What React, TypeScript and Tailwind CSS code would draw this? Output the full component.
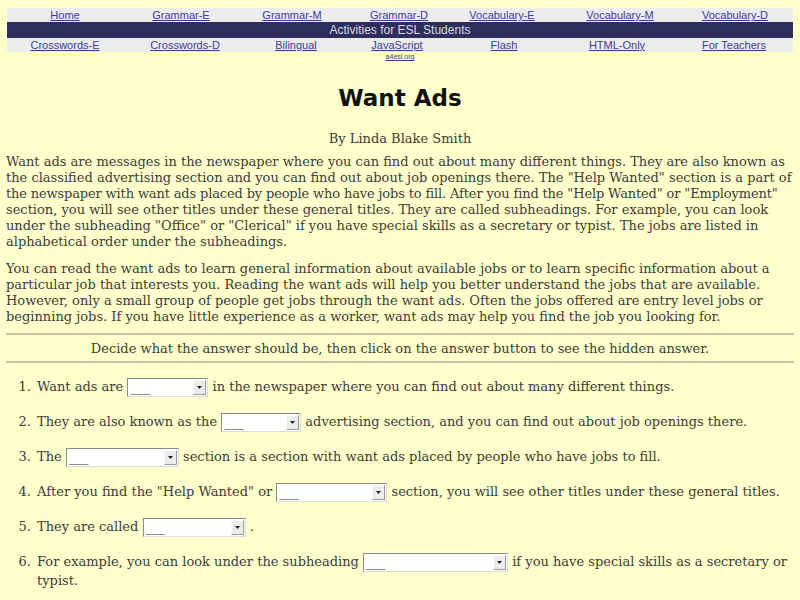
import React from "react";

const topLinks = ["Home", "Grammar-E", "Grammar-M", "Grammar-D", "Vocabulary-E", "Vocabulary-M", "Vocabulary-D"];
const bottomLinks = ["Crosswords-E", "Crosswords-D", "Bilingual", "JavaScript", "Flash", "HTML-Only", "For Teachers"];

const introLines = [
  "Want ads are messages in the newspaper where you can find out about many different things. They are also known as",
  'the classified advertising section and you can find out about job openings there. The "Help Wanted" section is a part of',
  'the newspaper with want ads placed by people who have jobs to fill. After you find the "Help Wanted" or "Employment"',
  "section, you will see other titles under these general titles. They are called subheadings. For example, you can look",
  'under the subheading "Office" or "Clerical" if you have special skills as a secretary or typist. The jobs are listed in',
  "alphabetical order under the subheadings.",
];

function Blank({ width }: { width: string }) {
  return (
    <span
      className={`inline-flex h-[19px] align-middle items-stretch bg-white border border-t-[#8a8a8a] border-l-[#8a8a8a] border-r-[#dcdcdc] border-b-[#dcdcdc] ${width}`}
    >
      <span className="flex-1 text-[13px] leading-[17px] pl-[2px] text-[#333]">___</span>
      <span className="w-[13px] my-[1px] mr-[1px] bg-[#ececec] border border-t-[#fafafa] border-l-[#fafafa] border-r-[#999] border-b-[#999] flex items-center justify-center">
        <svg width="5" height="3" viewBox="0 0 5 3">
          <path d="M0 0h5L2.5 3z" fill="#222" />
        </svg>
      </span>
    </span>
  );
}

function Question({ n, children }: { n: number; children: React.ReactNode }) {
  return (
    <li className="flex leading-[18px]">
      <span className="w-[31px] shrink-0 text-right pr-[6px]">{n}.</span>
      <span className="flex-1">{children}</span>
    </li>
  );
}

export default function App() {
  return (
    <div className="min-h-[600px] bg-[#ffffcc] text-[#3c3c38] font-['DejaVu_Serif',serif] text-[13px]">
      <div className="pt-[8px] px-[7px] font-['Liberation_Sans',Arial,sans-serif]">
        <div className="grid grid-cols-[116px_116px_106px_108px_98px_138px_92px] bg-[#ececec] h-[14px] text-[11px] leading-[14px] text-center">
          {topLinks.map((l) => (
            <a key={l} className="text-[#3b3b9a] underline whitespace-nowrap">{l}</a>
          ))}
        </div>
        <div className="bg-[#2e2e5c] h-[16px] text-[#d8d8e8] text-[12px] leading-[16px] text-center">
          Activities for ESL Students
        </div>
        <div className="grid grid-cols-[110px_130px_92px_110px_104px_122px_112px] pl-[3px] bg-[#ececec] h-[14px] text-[11px] leading-[14px] text-center">
          {bottomLinks.map((l) => (
            <a key={l} className="text-[#3b3b9a] underline whitespace-nowrap">{l}</a>
          ))}
        </div>
        <div className="mt-[1px] text-center text-[7px] leading-[8px] text-[#3b3b9a] underline">
          a4esl.org
        </div>
      </div>

      <h1 className="mt-[22px] text-center font-['DejaVu_Sans',sans-serif] font-bold text-[23px] leading-[30px] text-[#111]">
        Want Ads
      </h1>

      <p className="mt-[18px] text-center leading-[16px]">By Linda Blake Smith</p>

      <div className="px-[6px]">
        <p className="mt-[7px] leading-[16px]">
          {introLines.map((line, i) => (
            <span key={i} className={`block whitespace-nowrap ${i === 2 ? "tracking-[-0.15px]" : ""}`}>
              {line}
            </span>
          ))}
        </p>
        <p className="mt-[11px] leading-[16px]">
          You can read the want ads to learn general information about available jobs or to learn specific information about a
          particular job that interests you. Reading the want ads will help you better understand the jobs that are available.
          However, only a small group of people get jobs through the want ads. Often the jobs offered are entry level jobs or
          beginning jobs. If you have little experience as a worker, want ads may help you find the job you looking for.
        </p>

        <div className="mt-[8px] border-t-2 border-[#c4c4a4]" />
        <p className="pt-[6px] pb-[4px] text-center leading-[16px]">
          Decide what the answer should be, then click on the answer button to see the hidden answer.
        </p>
        <div className="border-t-2 border-[#c4c4a4]" />

        <ol className="mt-[15px] flex flex-col gap-[16px]">
          <Question n={1}>
            Want ads are <Blank width="w-[81px]" /> in the newspaper where you can find out about many different things.
          </Question>
          <Question n={2}>
            They are also known as the <Blank width="w-[80px]" /> advertising section, and you can find out about job openings there.
          </Question>
          <Question n={3}>
            The <Blank width="w-[113px]" /> section is a section with want ads placed by people who have jobs to fill.
          </Question>
          <Question n={4}>
            After you find the "Help Wanted" or <Blank width="w-[111px]" /> section, you will see other titles under these general titles.
          </Question>
          <Question n={5}>
            They are called <Blank width="w-[103px]" /> .
          </Question>
          <Question n={6}>
            <span className="whitespace-nowrap">
              For example, you can look under the subheading <Blank width="w-[145px]" /> if you have special skills as a secretary or
            </span>
            <br />
            typist.
          </Question>
        </ol>
      </div>
    </div>
  );
}
